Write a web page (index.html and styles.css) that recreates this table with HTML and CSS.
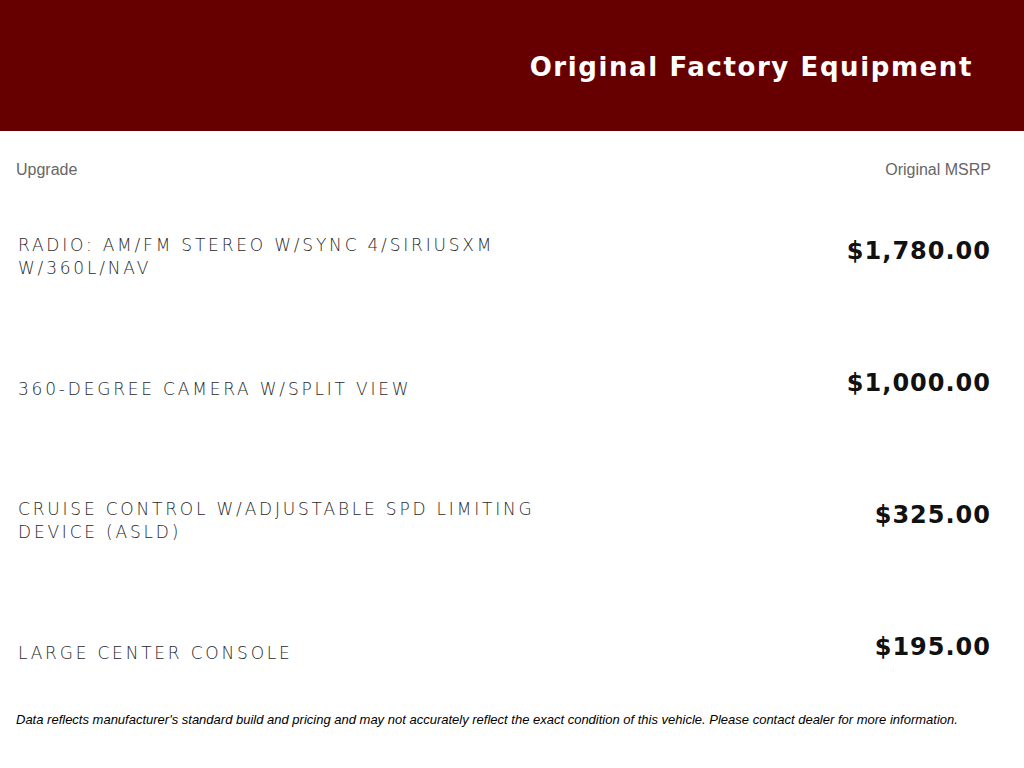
FILE: index.html
```html
<!DOCTYPE html>
<html>
<head>
<meta charset="utf-8">
<link rel="stylesheet" href="styles.css">
</head>
<body>
<header class="banner">
  <h1 class="banner-title">Original Factory Equipment</h1>
</header>
<main class="content">
  <div class="col-heads">
    <span>Upgrade</span>
    <span>Original MSRP</span>
  </div>
  <ul class="items">
    <li class="item">
      <span class="item-name">RADIO: AM/FM STEREO W/SYNC 4/SIRIUSXM W/360L/NAV</span>
      <span class="item-price">$1,780.00</span>
    </li>
    <li class="item">
      <span class="item-name">360-DEGREE CAMERA W/SPLIT VIEW</span>
      <span class="item-price">$1,000.00</span>
    </li>
    <li class="item">
      <span class="item-name">CRUISE CONTROL W/ADJUSTABLE SPD LIMITING DEVICE (ASLD)</span>
      <span class="item-price">$325.00</span>
    </li>
    <li class="item">
      <span class="item-name">LARGE CENTER CONSOLE</span>
      <span class="item-price">$195.00</span>
    </li>
  </ul>
  <p class="disclaimer">Data reflects manufacturer's standard build and pricing and may not accurately reflect the exact condition of this vehicle. Please contact dealer for more information.</p>
</main>
</body>
</html>
```
FILE: styles.css
```css
* { box-sizing: border-box; }
html, body { margin: 0; padding: 0; background: #fff; }
body { font-family: "Liberation Sans", Arial, sans-serif; width: 1024px; height: 768px; overflow: hidden; }

.banner {
  background: #660000;
  height: 131px;
  display: flex;
  align-items: center;
  justify-content: flex-end;
  padding-right: 51px;
}
.banner-title {
  margin: 0;
  color: #fff;
  font-family: "DejaVu Sans", sans-serif;
  font-weight: bold;
  font-size: 26px;
  letter-spacing: 1.6px;
  transform: translateY(1px);
}

.content { padding: 0 33px 0 16px; }

.col-heads {
  display: flex;
  justify-content: space-between;
  color: #666;
  font-size: 16px;
  padding-top: 30px;
  height: 60px;
}

.items { list-style: none; margin: 0; padding: 0; }
.item {
  display: flex;
  justify-content: space-between;
  align-items: center;
  height: 132px;
  padding-left: 2px;
}
.item-name {
  width: 540px;
  font-family: "DejaVu Sans", sans-serif;
  font-weight: 200;
  font-size: 17px;
  letter-spacing: 2.8px;
  line-height: 23px;
  color: #2a2a2a;
}
.item-price {
  font-family: "DejaVu Sans", sans-serif;
  font-weight: bold;
  font-size: 24px;
  letter-spacing: 1px;
  color: #111;
  padding-bottom: 12px;
}

.disclaimer {
  margin: -7px 0 0;
  font-size: 13px;
  font-style: italic;
  color: #000;
}
```
